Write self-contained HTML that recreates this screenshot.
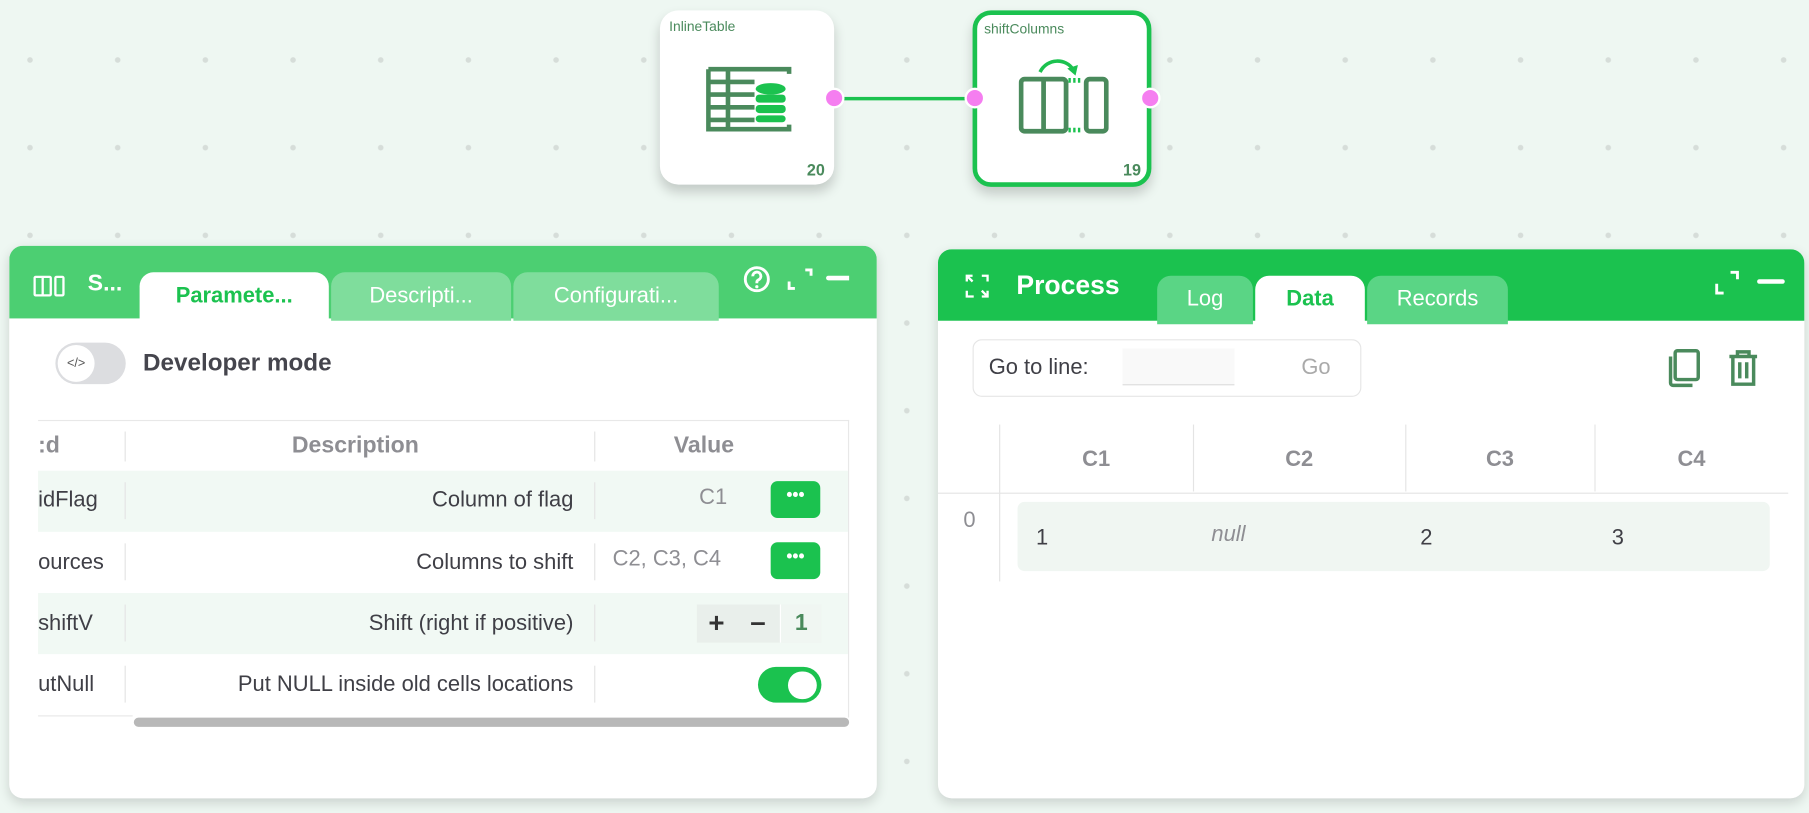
<!DOCTYPE html>
<html><head><meta charset="utf-8"><style>
*{box-sizing:border-box;margin:0;padding:0}
html,body{width:1809px;height:813px;overflow:hidden;background:#eef7f2}
#w{position:absolute;left:0;top:0;width:1568px;height:705px;transform:scale(1.15370);transform-origin:0 0;font-family:"Liberation Sans",sans-serif;
background-color:#eef7f2;background-image:radial-gradient(circle,#d6ddd9 2.2px,transparent 2.6px);background-size:76px 76px;background-position:-12px 14px}
.a{position:absolute}
.node{position:absolute;background:#fff;border-radius:16px;box-shadow:0 6px 10px rgba(0,0,0,.18)}
.nt{position:absolute;left:8px;top:7px;font-size:12px;color:#4a8a5c}
.nn{position:absolute;right:8px;bottom:5px;font-size:14px;font-weight:bold;color:#4a8a5c}
.port{position:absolute;width:18px;height:18px;border-radius:50%;background:#f57ef0;border:2px solid #fff}
.panel{position:absolute;background:#fff;border-radius:12px;box-shadow:0 4px 10px rgba(0,0,0,.15);overflow:hidden}
.tab{position:absolute;border-radius:12px 12px 0 0;font-size:19px;color:#fff;text-align:center;line-height:42px;white-space:nowrap}
.row{position:absolute;left:33px;width:702px;height:53px}
.c{position:absolute;font-size:19px;color:#3f3f46;white-space:nowrap}
.sep{position:absolute;width:1px;background:#e4e4e4}
.dots{position:absolute;width:43px;height:32px;background:#1bc24f;border-radius:6px;color:#fff;font-size:15px;font-weight:bold;text-align:center;line-height:26px}
</style></head><body><div id="w">

<div class="a" style="left:723px;top:84px;width:122px;height:3px;background:#1bc24f"></div>

<div class="node" style="left:572px;top:9px;width:151px;height:151px">
<div class="nt">InlineTable</div>
<svg class="a" style="left:40px;top:46px" width="74" height="62" viewBox="0 0 74 56">
<g fill="none" stroke="#4a8a5c" stroke-width="4">
<path d="M2 2H42M2 13H42M2 24H42M2 35H42M2 46H42M2 2V54H42M19 2V54M72 6V2H42M72 50V54H42"/></g>
<g fill="#1bc24f"><ellipse cx="56" cy="19" rx="13" ry="5"/><rect x="43" y="24" width="26" height="7" rx="3"/><rect x="43" y="33" width="26" height="7" rx="3"/><rect x="43" y="42" width="26" height="6" rx="3"/></g>
</svg>
<div class="nn">20</div></div>

<div class="node" style="left:843px;top:9px;width:155px;height:153px;border:4px solid #1bc24f">
<div class="nt" style="left:6px;top:5px">shiftColumns</div>
<svg class="a" style="left:36px;top:36px" width="78" height="70" viewBox="0 0 76 66">
<g fill="none" stroke="#4a8a5c" stroke-width="4"><rect x="2" y="18" width="38" height="44" rx="3"/><path d="M21 18V62"/><rect x="57" y="18" width="17" height="44" rx="3"/></g>
<path d="M42 19H54M42 61H54" stroke="#1bc24f" stroke-width="4" stroke-dasharray="2 2"/>
<path d="M18 12C24 0 40 0 46 10" fill="none" stroke="#1bc24f" stroke-width="3"/><path d="M41 9L48 15L50 6Z" fill="#1bc24f"/>
</svg>
<div class="nn" style="right:5px;bottom:3px">19</div></div>

<div class="port" style="left:714px;top:76px"></div>
<div class="port" style="left:836px;top:76px"></div>
<div class="port" style="left:988px;top:76px"></div>

<div class="panel" style="left:8px;top:213px;width:752px;height:479px">
<div class="a" style="left:0;top:0;width:752px;height:63px;background:#4ccf72"></div>
<svg class="a" style="left:21px;top:25px" width="28" height="20" viewBox="0 0 28 20"><g fill="none" stroke="#fff" stroke-width="2"><rect x="1" y="2" width="14" height="16" rx="1"/><path d="M8 2V18"/><rect x="19" y="2" width="7" height="16" rx="1"/></g></svg>
<div class="a" style="left:68px;top:22px;font-size:20px;font-weight:bold;color:#fff">S...</div>
<div class="tab" style="left:113px;top:23px;width:164px;background:#fff;color:#1bc24f;font-weight:bold">Paramete...</div>
<div class="tab" style="left:279px;top:23px;width:156px;background:#7fdd9c">Descripti...</div>
<div class="tab" style="left:437px;top:23px;width:178px;background:#7fdd9c">Configurati...</div>
<svg class="a" style="left:636px;top:17px" width="92" height="26" viewBox="0 0 92 26"><g fill="none" stroke="#fff" stroke-width="2.5"><circle cx="12" cy="12" r="10"/><path d="M8.5 9.5a3.5 3.5 0 1 1 5 3c-1.5.8-1.5 1.5-1.5 3"/><path d="M40 14v6h5M54 4h5v5"/></g><circle cx="12" cy="18.5" r="1.4" fill="#fff"/><rect x="72" y="9" width="22" height="4" rx="2" fill="#fff"/></svg>

<div class="a" style="left:40px;top:84px;width:61px;height:36px;border-radius:18px;background:#dcdde0"></div>
<div class="a" style="left:42px;top:86px;width:32px;height:32px;border-radius:16px;background:#fff;font-size:11px;color:#555;text-align:center;line-height:32px">&lt;/&gt;</div>
<div class="a" style="left:116px;top:90px;font-size:21px;font-weight:bold;color:#45454d">Developer mode</div>

<div class="a" style="left:25px;top:151px;width:703px;height:258px;border-top:1px solid #e8e8e8;border-right:1px solid #e8e8e8"></div>
</div>

<div class="c" style="left:33px;top:375px;color:#8e8e93;font-weight:bold;font-size:20px">:d</div>
<div class="c" style="left:253px;top:375px;color:#8e8e93;font-weight:bold;font-size:20px">Description</div>
<div class="c" style="left:584px;top:375px;color:#8e8e93;font-weight:bold;font-size:20px">Value</div>
<div class="sep" style="left:108px;top:374px;height:26px"></div><div class="sep" style="left:515px;top:374px;height:26px"></div>

<div class="row" style="top:408px;background:#f1f9f4"></div>
<div class="row" style="top:514px;background:#f1f9f4"></div>
<div class="a" style="left:33px;top:620px;width:82px;height:1px;background:#e8e8e8"></div>
<div class="sep" style="left:108px;top:418px;height:32px"></div><div class="sep" style="left:515px;top:418px;height:32px"></div>
<div class="sep" style="left:108px;top:471px;height:32px"></div><div class="sep" style="left:515px;top:471px;height:32px"></div>
<div class="sep" style="left:108px;top:524px;height:32px"></div><div class="sep" style="left:515px;top:524px;height:32px"></div>
<div class="sep" style="left:108px;top:577px;height:32px"></div><div class="sep" style="left:515px;top:577px;height:32px"></div>

<div class="c" style="left:33px;top:423px">idFlag</div>
<div class="c" style="left:33px;top:477px">ources</div>
<div class="c" style="left:33px;top:530px">shiftV</div>
<div class="c" style="left:33px;top:583px">utNull</div>
<div class="c" style="right:1071px;top:423px">Column of flag</div>
<div class="c" style="right:1071px;top:477px">Columns to shift</div>
<div class="c" style="right:1071px;top:530px">Shift (right if positive)</div>
<div class="c" style="right:1071px;top:583px">Put NULL inside old cells locations</div>
<div class="c" style="left:606px;top:421px;color:#8e8e93">C1</div>
<div class="c" style="left:531px;top:474px;color:#8e8e93">C2, C3, C4</div>
<div class="dots" style="left:668px;top:417px">•••</div>
<div class="dots" style="left:668px;top:470px">•••</div>
<div class="a" style="left:604px;top:524px;width:108px;height:33px;background:#e9efeb"></div>
<div class="a" style="left:604px;top:524px;width:34px;height:33px;font-size:24px;font-weight:bold;color:#333;text-align:center;line-height:33px">+</div>
<div class="a" style="left:640px;top:524px;width:34px;height:33px;font-size:24px;font-weight:bold;color:#333;text-align:center;line-height:31px">–</div>
<div class="a" style="left:676px;top:524px;width:36px;height:33px;background:#f0f6f2;font-size:20px;font-weight:bold;color:#4a8a5c;text-align:center;line-height:33px;border-left:1px solid #fff">1</div>
<div class="a" style="left:657px;top:578px;width:55px;height:31px;border-radius:16px;background:#1bc24f"></div>
<div class="a" style="left:683px;top:582px;width:25px;height:24px;border-radius:12px;background:#fff"></div>
<div class="a" style="left:116px;top:622px;width:620px;height:8px;border-radius:4px;background:#b8b8b8"></div>

<div class="panel" style="left:813px;top:216px;width:751px;height:476px">
<div class="a" style="left:0;top:0;width:751px;height:62px;background:#1bc24f"></div>
<svg class="a" style="left:22px;top:20px" width="24" height="24" viewBox="0 0 24 24"><g fill="none" stroke="#fff" stroke-width="2"><path d="M3 8V3h5M3 3l5 5M21 16v5h-5M21 21l-5-5M9 21H3v-5M21 8V3h-5"/></g></svg>
<div class="a" style="left:68px;top:18px;font-size:23px;font-weight:bold;color:#fff">Process</div>
<div class="tab" style="left:190px;top:23px;width:83px;background:#5ad585">Log</div>
<div class="tab" style="left:275px;top:23px;width:95px;background:#fff;color:#1bc24f;font-weight:bold">Data</div>
<div class="tab" style="left:372px;top:23px;width:122px;background:#5ad585">Records</div>
<svg class="a" style="left:672px;top:18px" width="66" height="22" viewBox="0 0 66 22"><g fill="none" stroke="#fff" stroke-width="2.5"><path d="M3 12v8h6M15 2h6v6"/></g><rect x="38" y="8" width="24" height="4" rx="2" fill="#fff"/></svg>

<div class="a" style="left:30px;top:78px;width:337px;height:50px;border:1px solid #e6e6e6;border-radius:8px"></div>
<div class="a" style="left:44px;top:92px;font-size:19px;color:#3f3f46">Go to line:</div>
<div class="a" style="left:160px;top:86px;width:97px;height:32px;background:#f9f9f9;border-bottom:1px solid #ddd"></div>
<div class="a" style="left:315px;top:92px;font-size:19px;color:#aaa">Go</div>
<svg class="a" style="left:632px;top:86px" width="82" height="34" viewBox="0 0 82 34"><g fill="none" stroke="#4a8a5c" stroke-width="3"><rect x="7" y="2" width="20" height="25" rx="2"/><path d="M3 7v23a2 2 0 0 0 2 2h17"/><path d="M54 7h24M61 7V3h10v4M57 7v24h18V7M63 12v14M69 12v14"/></g></svg>

<div class="a" style="left:53px;top:152px;width:1px;height:136px;background:#e4e4e4"></div>
<div class="a" style="left:0;top:211px;width:737px;height:1px;background:#e4e4e4"></div>
<div class="a" style="left:221px;top:152px;width:1px;height:58px;background:#e4e4e4"></div>
<div class="a" style="left:405px;top:152px;width:1px;height:58px;background:#e4e4e4"></div>
<div class="a" style="left:569px;top:152px;width:1px;height:58px;background:#e4e4e4"></div>
<div class="c" style="left:125px;top:172px;color:#8e8e93;font-weight:bold">C1</div>
<div class="c" style="left:301px;top:172px;color:#8e8e93;font-weight:bold">C2</div>
<div class="c" style="left:475px;top:172px;color:#8e8e93;font-weight:bold">C3</div>
<div class="c" style="left:641px;top:172px;color:#8e8e93;font-weight:bold">C4</div>
<div class="c" style="left:22px;top:225px;color:#8e8e93">0</div>
<div class="a" style="left:69px;top:219px;width:652px;height:60px;background:#f0f6f2;border-radius:6px"></div>
<div class="c" style="left:85px;top:240px">1</div>
<div class="c" style="left:237px;top:237px;color:#8e8e93;font-style:italic">null</div>
<div class="c" style="left:418px;top:240px">2</div>
<div class="c" style="left:584px;top:240px">3</div>
</div>

</div></body></html>
